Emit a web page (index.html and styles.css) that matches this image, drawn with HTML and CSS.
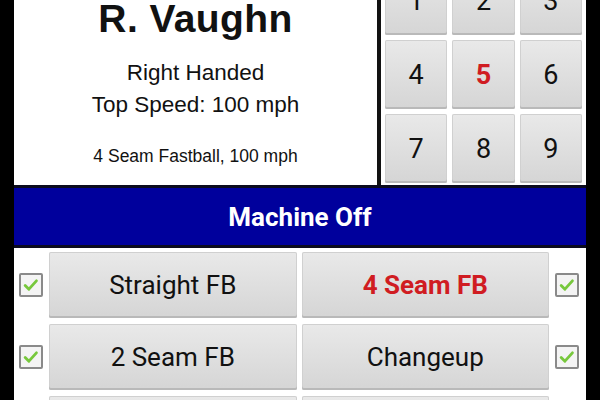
FILE: index.html
```html
<!DOCTYPE html>
<html>
<head>
<meta charset="utf-8">
<link rel="stylesheet" href="styles.css">
</head>
<body>
<div class="screen">
  <div class="top">
    <div class="info">
      <div class="name">R. Vaughn</div>
      <div class="detail first">Right Handed</div>
      <div class="detail">Top Speed: 100 mph</div>
      <div class="pitch">4 Seam Fastball, 100 mph</div>
    </div>
    <div class="divider"></div>
    <div class="keypad">
      <div class="key">1</div>
      <div class="key">2</div>
      <div class="key">3</div>
      <div class="key">4</div>
      <div class="key active">5</div>
      <div class="key">6</div>
      <div class="key">7</div>
      <div class="key">8</div>
      <div class="key">9</div>
    </div>
  </div>
  <div class="status">Machine Off</div>
  <div class="pitches">
    <div class="check left"><svg viewBox="0 0 24 24" width="24" height="24"><polyline points="5,12.5 9.5,17 18.5,7" fill="none" stroke="#77c83c" stroke-width="3.4" stroke-linecap="round" stroke-linejoin="round"/></svg></div>
    <div class="pbtn">Straight FB</div>
    <div class="pbtn selected">4 Seam FB</div>
    <div class="check right"><svg viewBox="0 0 24 24" width="24" height="24"><polyline points="5,12.5 9.5,17 18.5,7" fill="none" stroke="#77c83c" stroke-width="3.4" stroke-linecap="round" stroke-linejoin="round"/></svg></div>

    <div class="check left"><svg viewBox="0 0 24 24" width="24" height="24"><polyline points="5,12.5 9.5,17 18.5,7" fill="none" stroke="#77c83c" stroke-width="3.4" stroke-linecap="round" stroke-linejoin="round"/></svg></div>
    <div class="pbtn">2 Seam FB</div>
    <div class="pbtn">Changeup</div>
    <div class="check right"><svg viewBox="0 0 24 24" width="24" height="24"><polyline points="5,12.5 9.5,17 18.5,7" fill="none" stroke="#77c83c" stroke-width="3.4" stroke-linecap="round" stroke-linejoin="round"/></svg></div>

    <div class="check left"><svg viewBox="0 0 24 24" width="24" height="24"><polyline points="5,12.5 9.5,17 18.5,7" fill="none" stroke="#77c83c" stroke-width="3.4" stroke-linecap="round" stroke-linejoin="round"/></svg></div>
    <div class="pbtn">Curveball</div>
    <div class="pbtn">Slider</div>
    <div class="check right"><svg viewBox="0 0 24 24" width="24" height="24"><polyline points="5,12.5 9.5,17 18.5,7" fill="none" stroke="#77c83c" stroke-width="3.4" stroke-linecap="round" stroke-linejoin="round"/></svg></div>
  </div>
</div>
</body>
</html>
```
FILE: styles.css
```css
html, body {
  margin: 0;
  padding: 0;
  background: #000;
  width: 600px;
  height: 400px;
  overflow: hidden;
}

.screen {
  margin-left: 14px;
  width: 572px;
  height: 400px;
  background: #fff;
  display: flex;
  flex-direction: column;
  overflow: hidden;
}

.top {
  height: 185px;
  display: flex;
  flex-shrink: 0;
}

.info {
  width: 363px;
  background: #fff;
  display: flex;
  flex-direction: column;
  align-items: center;
  font-family: "Liberation Sans", Arial, sans-serif;
  color: #111;
}

.name {
  font-size: 39px;
  font-weight: bold;
  line-height: 37px;
  letter-spacing: 0.4px;
}

.detail {
  font-size: 22.5px;
  line-height: 32px;
}

.detail.first {
  margin-top: 20px;
}

.pitch {
  font-size: 17.5px;
  line-height: 20px;
  margin-top: 25px;
}

.divider {
  width: 4px;
  background: #111;
}

.keypad {
  flex: 1;
  background: #fff;
  display: grid;
  grid-template-columns: repeat(3, 1fr);
  grid-template-rows: repeat(3, 69px);
  gap: 5px;
  padding: 0 4px 2px 4px;
  align-content: end;
  overflow: hidden;
}

.key,
.pbtn {
  background: linear-gradient(#e9e9e9, #d5d5d5);
  border-radius: 2px;
  box-shadow: inset 0 -2px 0 #b9b9b9, inset 0 0 0 1px #d0d0d0;
  display: flex;
  align-items: center;
  justify-content: center;
  font-family: Roboto, "Noto Sans", sans-serif;
  color: #111;
}

.key {
  font-size: 27px;
}

.key.active {
  color: #d01c22;
  font-weight: bold;
}

.status {
  height: 57px;
  flex-shrink: 0;
  background: #00009c;
  border-top: 3px solid #0b0b1e;
  border-bottom: 3px solid #0b0b1e;
  color: #fff;
  font-family: Roboto, "Noto Sans", sans-serif;
  font-weight: bold;
  font-size: 26px;
  display: flex;
  align-items: center;
  justify-content: center;
}

.pitches {
  display: grid;
  grid-template-columns: 30px 1fr 1fr 32px;
  grid-auto-rows: 66px;
  column-gap: 5px;
  row-gap: 6px;
  padding-top: 4px;
}

.pbtn {
  font-size: 26px;
}

.pbtn.selected {
  color: #d01c22;
  font-weight: bold;
}

.check {
  width: 24px;
  height: 24px;
  box-sizing: border-box;
  border: 2px solid #8a8a8a;
  border-radius: 2px;
  background: #f4f4f4;
  align-self: center;
  display: flex;
  align-items: center;
  justify-content: center;
}

.check svg {
  display: block;
  width: 20px;
  height: 20px;
}

.check.left {
  justify-self: end;
  margin-right: 1px;
}

.check.right {
  justify-self: start;
  margin-left: 1px;
}
```
